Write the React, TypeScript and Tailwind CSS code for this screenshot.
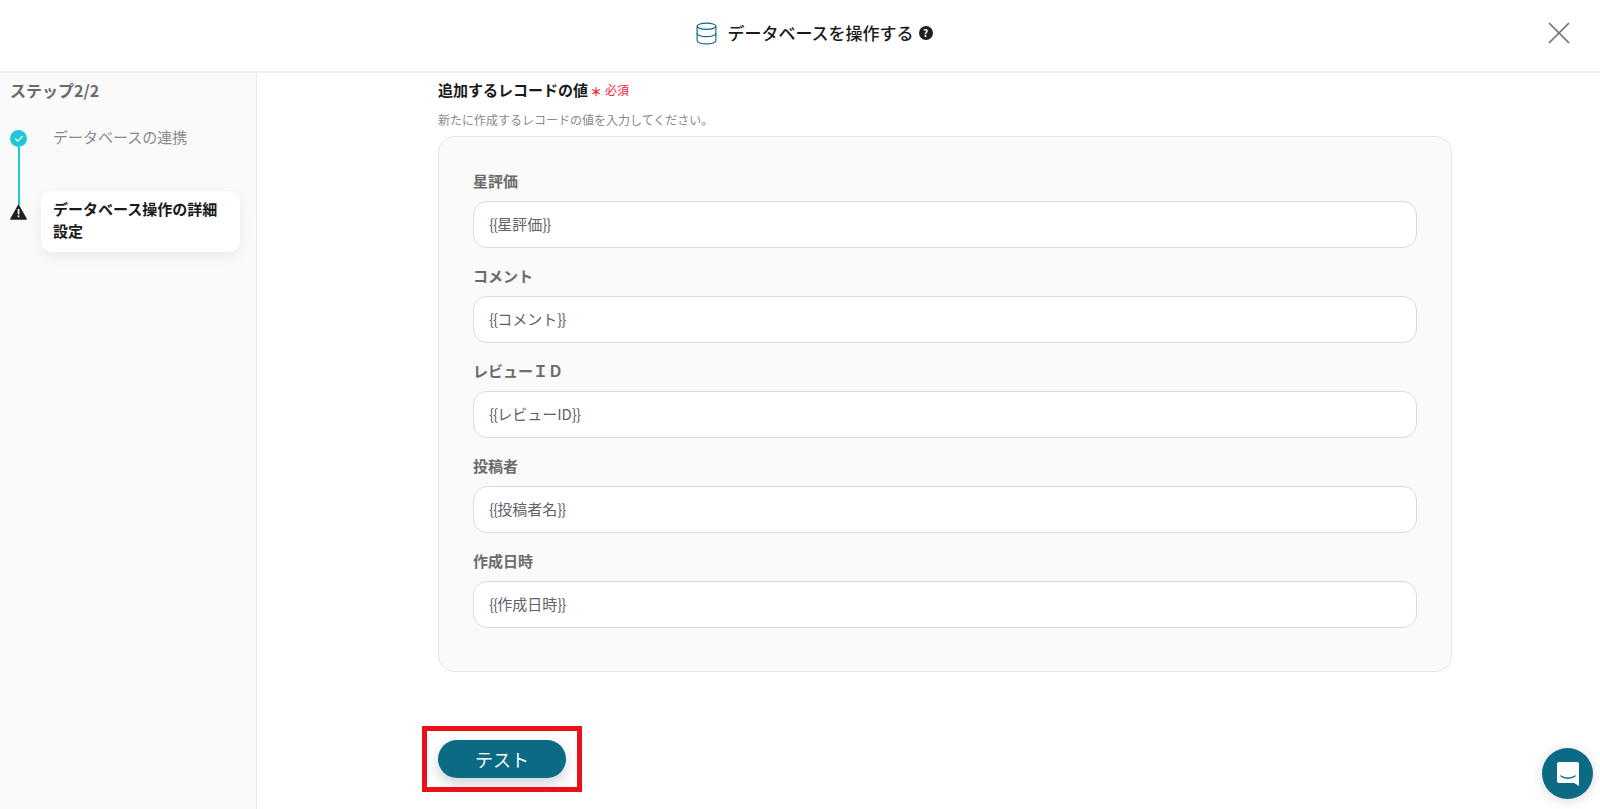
import { X, Check, Database } from 'lucide-react';

const fields = [
  { label: '星評価', value: '星評価' },
  { label: 'コメント', value: 'コメント' },
  { label: 'レビューＩＤ', value: 'レビューID' },
  { label: '投稿者', value: '投稿者名' },
  { label: '作成日時', value: '作成日時' },
];

function Field({ label, value }: { label: string; value: string }) {
  return (
    <div className="flex flex-col">
      <label className="h-[21px] text-[15px] leading-[21px] font-bold text-[#6b6b6b]">{label}</label>
      <div className="mt-[10px] flex h-[47px] items-center rounded-[14px] border border-[#d9dbe3] bg-white px-[15px] text-[15px] text-[#5f6368]">
        <span className="tracking-[-1px]">{'{{'}</span>
        {value}
        <span className="tracking-[-1px]">{'}}'}</span>
      </div>
    </div>
  );
}

export default function App() {
  return (
    <div className="flex h-[809px] w-[1600px] flex-col overflow-hidden bg-white font-['Noto_Sans_CJK_JP','Noto_Sans',sans-serif] text-[#1a1a1a]">
      <header className="relative flex h-[73px] shrink-0 items-center justify-center border-b-2 border-[#f0f0f0] pb-[5px] pl-[27px]">
        <div className="flex items-center">
          <Database className="h-[25px] w-[25px] text-[#0b6a84]" strokeWidth={1.1} />
          <span className="ml-[8px] text-[17px] leading-[24px] font-medium text-[#1a1a1a]">データベースを操作する</span>
          <span className="ml-[5px] flex h-[14px] w-[14px] items-center justify-center rounded-full bg-[#1f1f1f] text-[10px] leading-none font-bold text-white">?</span>
        </div>
        <button className="absolute top-[14px] right-[22px] text-[#6f6f6f]">
          <X className="h-[38px] w-[38px]" strokeWidth={1.1} />
        </button>
      </header>
      <div className="flex min-h-0 flex-1">
        <aside className="w-[257px] shrink-0 border-r border-[#e8e8e8] bg-[#fafafa] pt-[5px]">
          <div className="pl-[10px] text-[16px] leading-[24px] font-bold text-[#6b6b6b]">ステップ2/2</div>
          <div className="mt-[21px] ml-[10px] flex">
            <div className="flex w-[17px] flex-col items-center pt-[7px]">
              <div className="flex h-[17px] w-[17px] items-center justify-center rounded-full bg-[#22c7d6]">
                <Check className="h-[10px] w-[10px] text-white" strokeWidth={3} />
              </div>
              <div className="h-[58px] w-[2px] bg-[#1cc8d2]" />
              <svg className="-mt-[1px] h-[16px] w-[17px]" viewBox="0 0 17 16">
                <path d="M8.5 0 16.8 14.8a.7.7 0 0 1-.6 1H.8a.7.7 0 0 1-.6-1Z" fill="#1f1f1f" />
                <rect x="7.7" y="5" width="1.7" height="5.4" fill="#fff" />
                <rect x="7.7" y="11.4" width="1.7" height="1.8" fill="#fff" />
              </svg>
            </div>
            <div className="ml-[14px] w-[199px]">
              <div className="h-[68px] pt-[1px] pl-[12px] text-[15px] leading-[26px] text-[#8a8a8a]">データベースの連携</div>
              <div className="rounded-[10px] bg-white px-[12px] pt-[7px] pb-[10px] text-[15px] leading-[22px] font-bold text-[#1a1a1a] shadow-[0_4px_14px_rgba(0,0,0,0.07)]">
                データベース操作の詳細設定
              </div>
            </div>
          </div>
        </aside>
        <main className="relative flex-1 pl-[181px]">
          <div className="w-[1014px]">
            <div className="flex h-[34px] items-center">
              <span className="text-[15px] font-bold text-[#1a1a1a]">追加するレコードの値</span>
              <span className="ml-[2px] translate-y-[2px] text-[12px] font-bold text-[#f0243e]">＊</span>
              <span className="ml-[3px] text-[12px] text-[#f0243e]">必須</span>
            </div>
            <p className="mt-[5px] text-[12px] leading-[16px] text-[#8a8a8a]">新たに作成するレコードの値を入力してください。</p>
            <div className="mt-[8px] flex h-[536px] flex-col gap-[17px] rounded-[16px] border border-[#e6e7ec] bg-[#fafafa] px-[34px] pt-[33px]">
              {fields.map((f) => (
                <Field key={f.label} label={f.label} value={f.value} />
              ))}
            </div>
            <div className="relative mt-[68px] w-[128px]">
              <button className="flex h-[38px] w-[128px] items-center justify-center rounded-full bg-[#0b6a84] text-[18px] text-white shadow-[0_6px_14px_rgba(0,40,60,0.2)]">
                テスト
              </button>
              <div className="absolute top-[-14px] left-[-16px] h-[66px] w-[160px] border-[5px] border-[#e8111a]" />
            </div>
          </div>
          <button className="absolute top-[675px] right-[7px] flex h-[51px] w-[51px] items-center justify-center rounded-full bg-[#0b6a84] shadow-[0_2px_12px_rgba(0,0,0,0.15)]">
            <svg width="24" height="26" viewBox="0 0 24 26">
              <path d="M3 1h18a2 2 0 0 1 2 2v22l-5-3H3a2 2 0 0 1-2-2V3a2 2 0 0 1 2-2Z" fill="#fff" />
              <path d="M5 15c4 3 10 3 14 0" fill="none" stroke="#0b6a84" strokeWidth="1.5" strokeLinecap="round" />
            </svg>
          </button>
        </main>
      </div>
    </div>
  );
}
